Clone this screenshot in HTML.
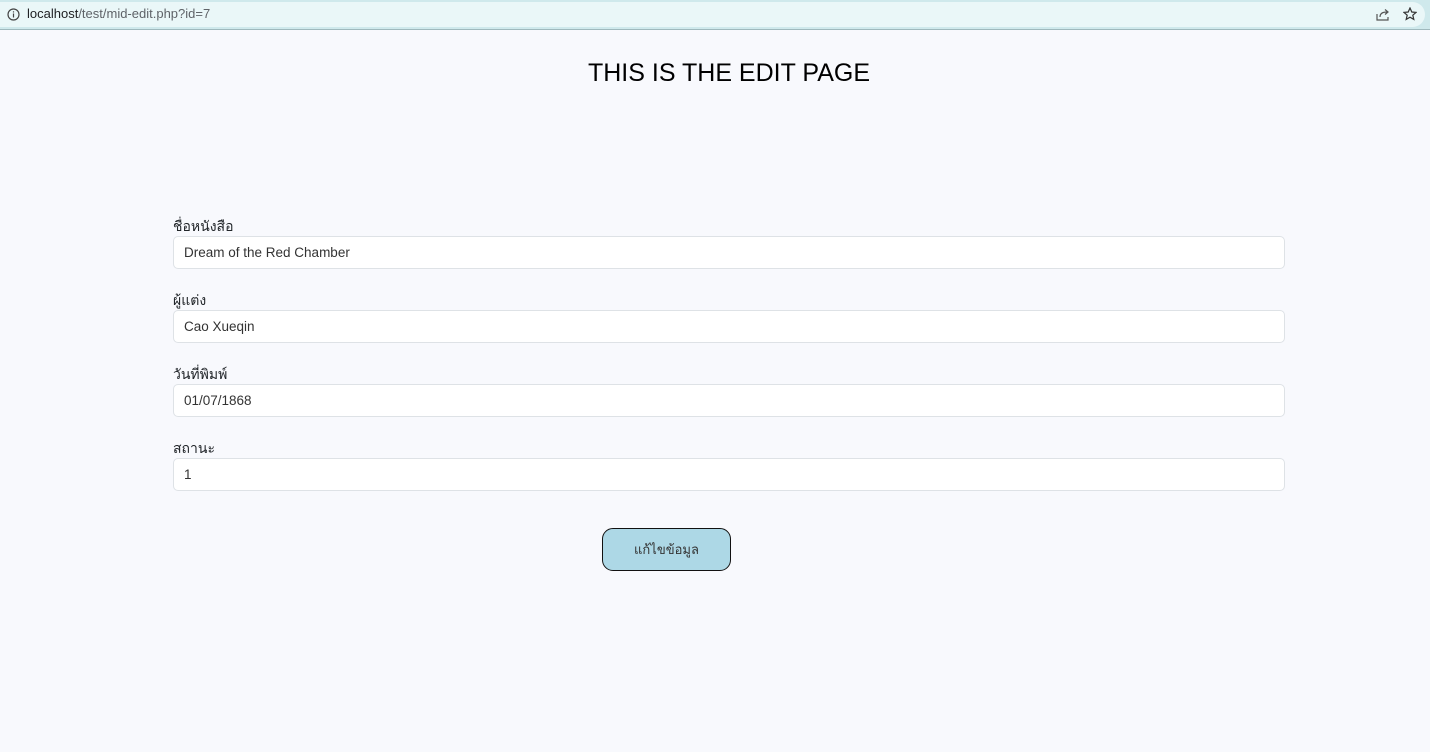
<!DOCTYPE html>
<html><head><meta charset="utf-8"><style>
*{box-sizing:border-box;margin:0;padding:0}
body{width:1430px;height:752px;background:#f8f9fd;font-family:"Liberation Sans",sans-serif;position:relative;overflow:hidden;color:#212529}
.top{position:absolute;left:0;top:0;width:1430px;height:30px;background:#cfe9ec;border-bottom:1px solid #9fb9bd}
.pill{position:absolute;left:0;top:2px;width:1425px;height:25px;background:#eaf7f8;border-radius:0 13px 13px 0}
.url{position:absolute;left:27px;top:6px;font-size:13px;color:#202124}
.url span{color:#5f6368}
h1{position:absolute;top:59px;left:0;width:1458px;text-align:center;font-size:25px;font-weight:400;color:#000}
label{position:absolute;left:173px;font-size:14px;color:#212529}
.in{position:absolute;left:173px;width:1112px;height:33px;background:#fff;border:1px solid #dee2e6;border-radius:5px;padding:8px 10px;font-size:13.5px;color:#333}
.btn{position:absolute;left:602px;top:528px;width:129px;height:43px;background:#add8e6;border:1.5px solid #111;border-radius:11px;text-align:center;line-height:42px;font-size:13px;color:#333}
</style></head><body>
<div class="top"><div class="pill"></div>
<svg style="position:absolute;left:7px;top:8px" width="13" height="13" viewBox="0 0 13 13"><circle cx="6.5" cy="6.5" r="5.5" fill="none" stroke="#444" stroke-width="1.2"/><rect x="5.9" y="5.5" width="1.2" height="4" fill="#444"/><rect x="5.9" y="3.3" width="1.2" height="1.2" fill="#444"/></svg>
<div class="url">localhost<span>/test/mid-edit.php?id=7</span></div>
<svg style="position:absolute;left:1376px;top:8px" width="14" height="13" viewBox="0 0 14 13"><path d="M1 6v6h11V9" fill="none" stroke="#555" stroke-width="1.2"/><path d="M4 9c0-4 3-5 7-5M9 1.5l3 2.5-3 2.5" fill="none" stroke="#555" stroke-width="1.2"/></svg>
<svg style="position:absolute;left:1403px;top:7px" width="14" height="14" viewBox="0 0 14 14"><path d="M7 1l1.8 4 4.2.4-3.2 2.8 1 4.2L7 10.2 3.2 12.4l1-4.2L1 5.4l4.2-.4z" fill="none" stroke="#333" stroke-width="1.2"/></svg>
</div>
<h1>THIS IS THE EDIT PAGE</h1>
<label style="top:216px">ชื่อหนังสือ</label>
<div class="in" style="top:236px">Dream of the Red Chamber</div>
<label style="top:290px">ผู้แต่ง</label>
<div class="in" style="top:310px">Cao Xueqin</div>
<label style="top:364px">วันที่พิมพ์</label>
<div class="in" style="top:384px">01/07/1868</div>
<label style="top:438px">สถานะ</label>
<div class="in" style="top:458px">1</div>
<div class="btn">แก้ไขข้อมูล</div>
</body></html>
